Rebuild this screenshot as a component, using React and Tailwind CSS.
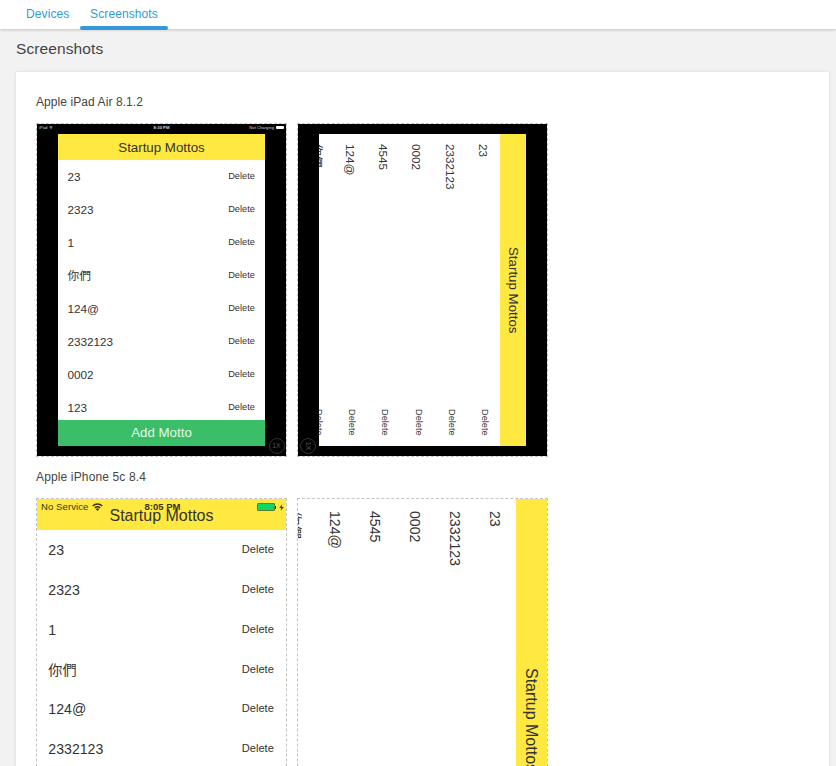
const MOTTOS = ['23', '2323', '1', '你們', '124@', '2332123', '0002', '123']
const MOTTOS_LANDSCAPE = ['23', '2332123', '0002', '4545', '124@', '你們']

// Sizes are in em, so the font size of the frame scales the whole app.
function MottoApp({ rows, footer }) {
  return (
    <div className="relative flex h-full w-full flex-col overflow-hidden bg-white text-[#333]">
      <div className="flex h-[1.95em] shrink-0 items-center justify-center bg-[#ffe941] pt-[2px]">
        <span className="leading-none">Startup Mottos</span>
      </div>
      <div className="min-h-0 flex-1 overflow-hidden">
        {rows.map((row) => (
          <div key={row} className="flex h-[2.483em] items-center justify-between pt-px pr-[0.76em] pl-[0.71em]">
            <span className="text-[0.882em] leading-none">{row}</span>
            <span className="pb-[0.1em] text-[0.695em] leading-none">Delete</span>
          </div>
        ))}
      </div>
      {footer && (
        <div className="flex h-[1.95em] shrink-0 items-center justify-center bg-[#3abf68] pt-px text-[#e6f7ec]">
          <span className="leading-none">Add Motto</span>
        </div>
      )}
    </div>
  )
}

function MottoAppLandscape({ rows }) {
  return (
    <div className="h-full w-full overflow-hidden bg-white text-[#333] [text-orientation:sideways] [writing-mode:vertical-rl]">
      <div className="flex h-full w-[1.95em] items-center justify-center bg-[#ffe941]">
        <span className="leading-none">Startup Mottos</span>
      </div>
      {rows.map((row) => (
        <div key={row} className="flex h-full w-[2.5em] items-center justify-between pt-[0.74em] pb-[0.76em]">
          <span className="pr-px text-[0.882em] leading-none">{row}</span>
          <span className="pl-[0.2em] text-[0.695em] leading-none">Delete</span>
        </div>
      ))}
    </div>
  )
}

function Wifi({ className }) {
  return (
    <svg viewBox="0 0 20 15" className={className} fill="none" stroke="currentColor" strokeWidth="2.8">
      <path d="M1.2 5.5a12.3 12.3 0 0 1 17.6 0" />
      <path d="M5 9.2a7 7 0 0 1 10 0" />
      <path d="M10 14.8 7 11.6a4.2 4.2 0 0 1 6 0z" fill="currentColor" stroke="none" />
    </svg>
  )
}

function PhoneStatus() {
  return (
    <div className="absolute inset-x-0 top-0 grid h-4 grid-cols-3 items-center pr-[2px] pl-1 text-[9.5px] leading-none text-[#37341c]">
      <div className="flex items-center gap-1 tracking-[0.1px] whitespace-nowrap">
        <span>No Service</span>
        <Wifi className="h-[8px] w-[11px]" />
      </div>
      <span className="text-center font-bold">8:05 PM</span>
      <div className="flex items-center justify-end">
        <span className="h-2 w-[18px] rounded-[1px] border border-[#5f7d2a] bg-[#0cd964]" />
        <span className="h-[3px] w-px bg-[#37341c]" />
        <svg viewBox="0 0 6 8" className="ml-[3px] h-[7px] w-[5px]" fill="currentColor">
          <path d="M4 0 0.3 4.5H2.7L2 8 5.7 3.5H3.3z" />
        </svg>
      </div>
    </div>
  )
}

function PadStatus() {
  return (
    <div className="grid h-[10px] grid-cols-3 items-start px-[2px] pt-px text-[4.2px] leading-[5px] text-[#d8d8d8]">
      <div className="flex h-[5px] items-center gap-[2px]">
        <span>iPad</span>
        <Wifi className="h-[3px] w-[4px]" />
      </div>
      <span className="text-center font-bold">8:30 PM</span>
      <div className="flex h-[5px] items-center justify-end gap-[2px] whitespace-nowrap">
        <span>Not Charging</span>
        <span className="h-[3px] w-[8px] rounded-[1px] bg-white" />
      </div>
    </div>
  )
}

function Frame({ className, children }) {
  return (
    <div className={`relative box-content w-[249px] shrink-0 overflow-hidden border border-dashed border-[#c4c4c4] ${className}`}>
      {children}
    </div>
  )
}

export default function App() {
  return (
    <div className="h-[766px] overflow-hidden bg-[#f2f2f2] font-['Liberation_Sans',Arial,'Noto_Sans_CJK_TC',sans-serif] text-[#444]">
      <nav className="relative flex h-[29px] bg-white pl-4 text-xs leading-[28px] tracking-[0.1px] text-[#3498db] shadow-[0_1px_3px_rgba(0,0,0,0.2)]">
        <a className="h-[30px] w-16 pl-[10px]">Devices</a>
        <a className="relative h-[30px] w-[88px] text-center">
          Screenshots
          <span className="absolute inset-x-0 bottom-0 h-1 rounded-sm bg-[#3498db]" />
        </a>
      </nav>
      <h2 className="h-[43px] pl-4 text-[15.5px] leading-[40px] tracking-[0.1px]">Screenshots</h2>
      <main className="mr-[7px] ml-4 h-[760px] bg-white px-5 pt-[20px] text-xs tracking-[0.08px] shadow-[0_0_3px_rgba(0,0,0,0.12)]">
        <h3 className="h-[31px] leading-5">Apple iPad Air 8.1.2</h3>
        <div className="flex gap-[10px] tracking-normal">
          <Frame className="h-[332px] bg-black bg-clip-padding text-[13.3px]">
            <PadStatus />
            <div className="ml-[21px] h-[311.5px] w-[207px]">
              <MottoApp rows={MOTTOS} footer />
            </div>
            <span className="absolute right-[1.5px] bottom-[2px] flex size-4 items-center justify-center rounded-full border border-[#333] text-[7px] text-[#555]">1X</span>
          </Frame>
          <Frame className="h-[322px] bg-black bg-clip-padding pt-[10px] text-[13.3px]">
            <div className="ml-[21px] h-[311.5px] w-[207px]">
              <MottoAppLandscape rows={MOTTOS_LANDSCAPE} />
            </div>
            <span className="absolute bottom-[2px] left-[1.5px] flex size-4 rotate-90 items-center justify-center rounded-full border border-[#333] text-[7px] text-[#555]">1X</span>
          </Frame>
        </div>
        <h3 className="h-[41px] pt-[10px] leading-5 tracking-[0.14px]">Apple iPhone 5c 8.4</h3>
        <div className="flex gap-[10px] tracking-normal">
          <Frame className="h-[442px] text-[16px]">
            <MottoApp rows={MOTTOS} footer />
            <PhoneStatus />
          </Frame>
          <Frame className="h-[442px] text-[16px]">
            <MottoAppLandscape rows={MOTTOS_LANDSCAPE} />
          </Frame>
        </div>
      </main>
    </div>
  )
}
